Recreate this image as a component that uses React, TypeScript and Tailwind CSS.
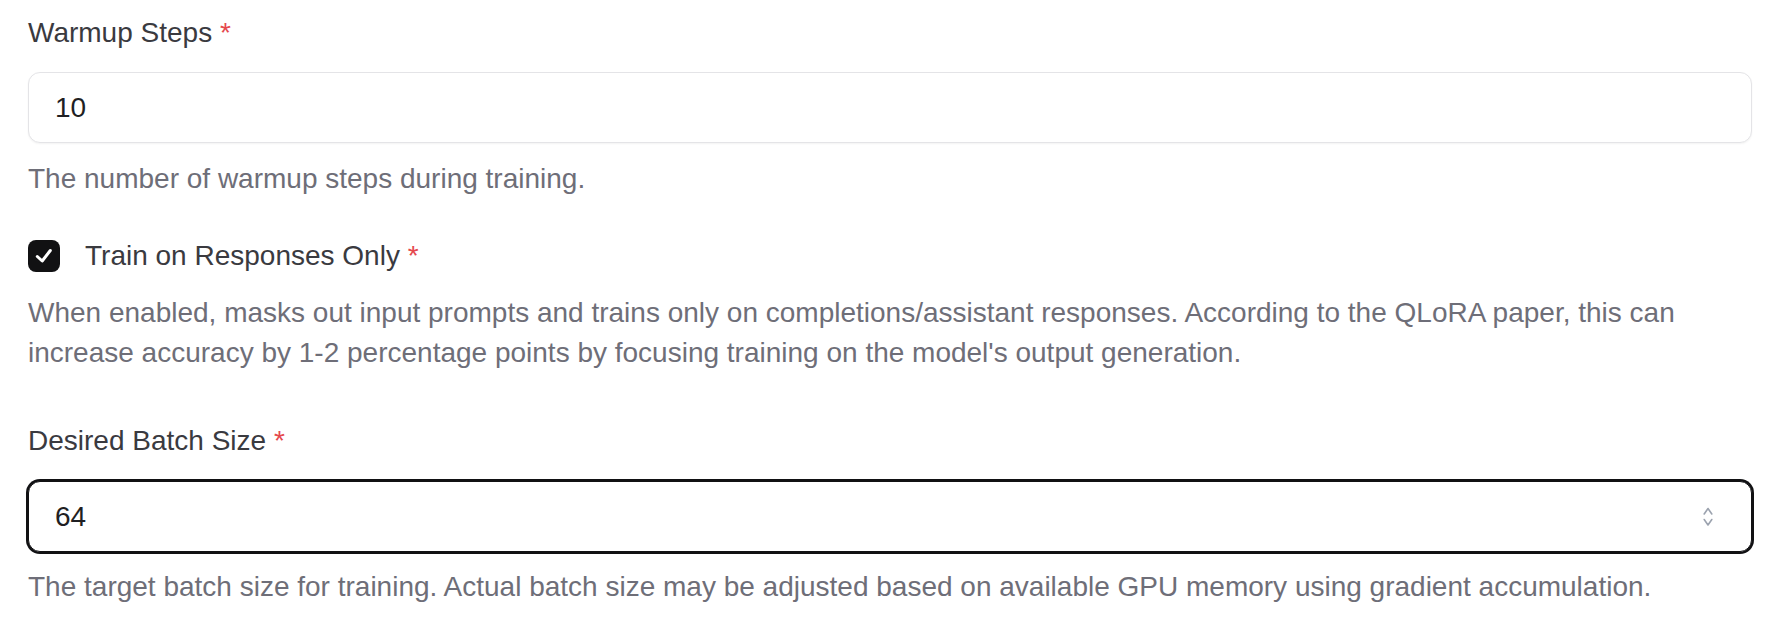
import React from "react";

const font = { fontFamily: '"Liberation Sans", Arial, Helvetica, sans-serif' };

function Req() {
  return <span className="text-[#e5484d]"> *</span>;
}

export default function App() {
  return (
    <div className="w-[1780px] h-[624px] bg-white px-[28px] overflow-hidden" style={font}>
      <div className="pt-[19px] text-[28px] leading-[28px] text-[#3a3a3f]">
        Warmup Steps<Req />
      </div>
      <div className="mt-[25px] h-[71px] flex items-center rounded-[12px] border border-[#e4e4e7] bg-white shadow-[0_1px_2px_rgba(0,0,0,0.05)] px-[26px]">
        <input
          readOnly
          value="10"
          className="w-full bg-transparent outline-none text-[28px] text-[#1f1f23]"
          style={font}
        />
      </div>
      <p className="mt-[16px] text-[28px] leading-[40px] text-[#6e6e78]">
        The number of warmup steps during training.
      </p>

      <div className="mt-[41px] h-[32px] flex items-center gap-[25px]">
        <div className="w-[32px] h-[32px] rounded-[8px] bg-[#111113] flex items-center justify-center shrink-0">
          <svg width="32" height="32" viewBox="0 0 32 32" fill="none">
            <path d="M9.3 16.5 L14.2 21 L22.3 10.5" stroke="#ffffff" strokeWidth="3" strokeLinecap="round" strokeLinejoin="round" />
          </svg>
        </div>
        <span className="text-[28px] leading-[28px] text-[#3a3a3f]">
          Train on Responses Only<Req />
        </span>
      </div>
      <p className="mt-[21px] text-[28px] leading-[40px] text-[#6e6e78]">
        When enabled, masks out input prompts and trains only on completions/assistant responses. According to the QLoRA paper, this can increase accuracy by 1-2 percentage points by focusing training on the model's output generation.
      </p>

      <div className="mt-[54px] text-[28px] leading-[28px] text-[#3a3a3f]">
        Desired Batch Size<Req />
      </div>
      <div className="mt-[26px] h-[71px] flex items-center rounded-[12px] border border-[#111113] shadow-[0_0_0_2px_#111113] bg-white pl-[26px] pr-[38px]">
        <input
          readOnly
          value="64"
          className="flex-1 bg-transparent outline-none text-[28px] text-[#1f1f23]"
          style={font}
        />
        <svg width="10" height="20" viewBox="0 0 10 20" fill="none" className="shrink-0">
          <path d="M1.2 7 L5 1.5 L8.8 7" stroke="#9ca3af" strokeWidth="1.6" strokeLinecap="round" strokeLinejoin="round" />
          <path d="M1.2 12.5 L5 18 L8.8 12.5" stroke="#9ca3af" strokeWidth="1.6" strokeLinecap="round" strokeLinejoin="round" />
        </svg>
      </div>
      <p className="mt-[15px] text-[28px] leading-[40px] text-[#6e6e78]">
        The target batch size for training. Actual batch size may be adjusted based on available GPU memory using gradient accumulation.
      </p>
    </div>
  );
}
